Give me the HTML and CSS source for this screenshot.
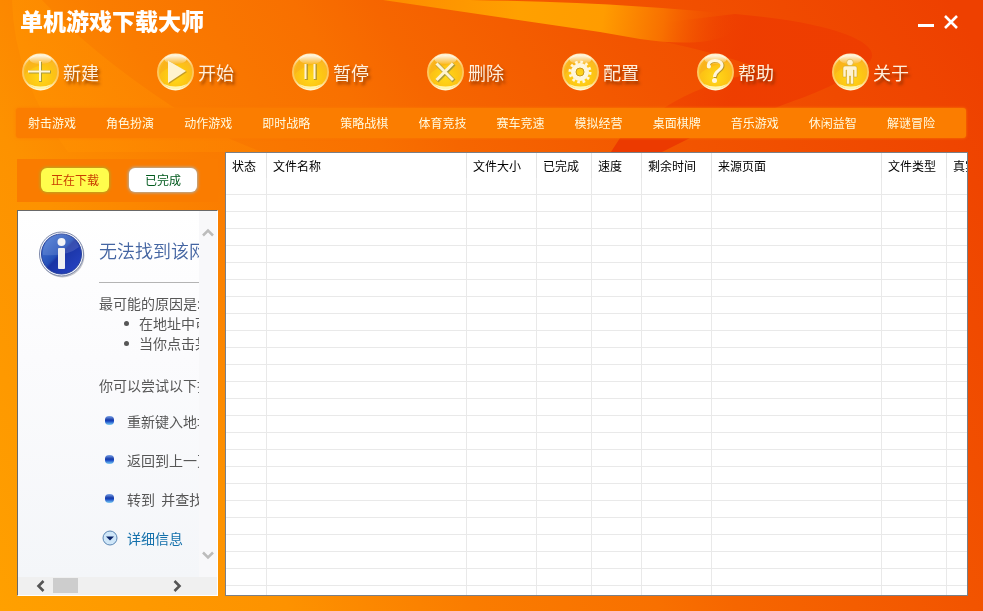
FILE: index.html
```html
<!DOCTYPE html>
<html lang="zh-CN">
<head>
<meta charset="utf-8">
<title>单机游戏下载大师</title>
<link rel="stylesheet" href="styles.css">
</head>
<body>
<svg class="backdrop" viewBox="0 0 983 611" preserveAspectRatio="none" aria-hidden="true">
  <defs>
    <linearGradient id="base" gradientUnits="userSpaceOnUse" x1="0" y1="611" x2="967" y2="26">
      <stop offset="0" stop-color="#ffa000"/><stop offset=".22" stop-color="#fd9200"/><stop offset=".28" stop-color="#fc8800"/><stop offset=".36" stop-color="#fa7c00"/><stop offset=".5" stop-color="#f87000"/><stop offset=".56" stop-color="#f66600"/><stop offset=".74" stop-color="#f25400"/><stop offset="1" stop-color="#ee4000"/>
    </linearGradient>
    <linearGradient id="swoosh" gradientUnits="userSpaceOnUse" x1="400" y1="0" x2="735" y2="50">
      <stop offset="0" stop-color="#fd8e00"/><stop offset=".35" stop-color="#ffa000"/><stop offset=".6" stop-color="#ff9c00"/><stop offset=".78" stop-color="#f87000"/><stop offset="1" stop-color="#ee4000" stop-opacity="0"/>
    </linearGradient>
    <linearGradient id="glow" gradientUnits="userSpaceOnUse" x1="20" y1="100" x2="220" y2="60">
      <stop offset="0" stop-color="#ff9200" stop-opacity=".7"/><stop offset="1" stop-color="#fd8400" stop-opacity=".6"/>
    </linearGradient>
    <linearGradient id="ember" gradientUnits="userSpaceOnUse" x1="600" y1="30" x2="740" y2="60">
      <stop offset="0" stop-color="#ee3c00" stop-opacity="0"/><stop offset="1" stop-color="#ee3c00" stop-opacity=".9"/>
    </linearGradient>
  </defs>
  <rect width="983" height="611" fill="url(#base)"/>
  <path d="M12 0H42Q90 52 170 105Q215 135 262 152H68Q14 80 12 0Z" fill="url(#glow)"/>
  <path d="M600 30L735 14C850 24 890 48 865 66C830 90 800 98 775 108H664Q700 84 765 70Q700 46 600 30Z" fill="url(#ember)"/>
  <path d="M611 152L620 138H690L662 152Z" fill="#ec3a00"/>
  <path d="M383 0H470Q640 3 745 16C740 40 700 48 640 39L600 32Z" fill="url(#swoosh)"/>
</svg>
<div class="app">
  <header class="titlebar">
    <h1>单机游戏下载大师</h1>
    <div class="window-buttons">
      <button type="button" aria-label="最小化"><svg width="16" height="16" viewBox="0 0 16 16"><path d="M0 11.5H16" stroke="#fff" stroke-width="3"/></svg></button>
      <button type="button" aria-label="关闭"><svg width="16" height="16" viewBox="0 0 16 16"><path d="M2 2L14 14M14 2L2 14" stroke="#fff" stroke-width="2.6"/></svg></button>
    </div>
  </header>

  <svg class="defs" aria-hidden="true">
    <defs>
      <radialGradient id="gold" cx=".5" cy=".65" r=".6"><stop offset="0" stop-color="#ffd91a"/><stop offset=".6" stop-color="#fdc414"/><stop offset="1" stop-color="#fbb626"/></radialGradient>
      <linearGradient id="rim" x1="0" x2="0" y1="0" y2="1"><stop offset="0" stop-color="#fff3cf"/><stop offset=".35" stop-color="#fdc35c"/><stop offset=".7" stop-color="#fdcb60"/><stop offset="1" stop-color="#fff9d8"/></linearGradient>
      <linearGradient id="shine" x1="0" x2="0" y1="0" y2="1"><stop offset="0" stop-color="#fff" stop-opacity=".9"/><stop offset="1" stop-color="#fff" stop-opacity=".1"/></linearGradient>
      <g id="orb">
        <circle cx="18.5" cy="19" r="17.6" fill="url(#gold)" stroke="url(#rim)" stroke-width="1.8"/>
        <path d="M3 21C3 11 9 4 19 4c5 0 9 2 12 5C22 10 8 15 3 21Z" fill="#f8a418" opacity=".4"/>
        <ellipse cx="18.5" cy="6.5" rx="11" ry="4.5" fill="url(#shine)"/>
        <path d="M7 31Q18.500 41 30 31Q18.500 36 7 31Z" fill="#fffac0" opacity=".9"/>
      </g>
    </defs>
  </svg>

  <nav class="toolbar" aria-label="工具栏">
    <button type="button"><svg width="37" height="38"><use href="#orb"/><path d="M18.500 9V29M7 19H29" stroke="#a99a3a" stroke-width="3"/><path d="M18 8V28M6 18.500H28" stroke="#fff6d8" stroke-width="2"/></svg><span>新建</span></button>
    <button type="button"><svg width="37" height="38"><use href="#orb"/><path d="M12 8L30 19L12 31Z" fill="#c49d24"/><path d="M11 7.500L29 18L11 30Z" fill="#fff3cf"/></svg><span>开始</span></button>
    <button type="button"><svg width="37" height="38"><use href="#orb"/><path d="M14.500 11V27M23.500 11V27" stroke="#b79a2a" stroke-width="3"/><path d="M13.500 11V26M22.500 11V26" stroke="#fff3d8" stroke-width="2"/></svg><span>暂停</span></button>
    <button type="button"><svg width="37" height="38"><use href="#orb"/><path d="M10 11L27 28M27 11L10 28" stroke="#a99b3a" stroke-width="4"/><path d="M9.500 10.500L26 27M26 10.500L9.500 27" stroke="#fff3cf" stroke-width="3"/></svg><span>删除</span></button>
    <button type="button"><svg width="37" height="38"><use href="#orb"/><circle cx="18" cy="19" r="6.500" fill="none" stroke="#fff6dc" stroke-width="5"/><circle cx="18" cy="19" r="10" fill="none" stroke="#fff6dc" stroke-width="3" stroke-dasharray="2.600 2.636"/><circle cx="18" cy="19" r="4" fill="none" stroke="#c79a1c"/></svg><span>配置</span></button>
    <button type="button"><svg width="37" height="38"><use href="#orb"/><g fill="none"><path d="M12 15C10 6 26 6 26 13C26 18 18.500 18 18.500 25" stroke="#b8952a" stroke-width="3"/><path d="M11.500 14.500C9.500 5.500 25 5.500 25 12.500C25 17.500 17.500 17.500 17.500 24" stroke="#fff6dc" stroke-width="3"/></g><circle cx="12" cy="13.500" r="2" fill="#fff6dc"/><circle cx="17.500" cy="27.500" r="2.500" fill="#fff6dc"/></svg><span>帮助</span></button>
    <button type="button"><svg width="37" height="38"><use href="#orb"/><g fill="#fff3d0" stroke="#c99c22" stroke-width=".5"><circle cx="18" cy="9.500" r="3.300"/><path d="M13 13H23Q25 13 25 15V24H22V17H21.500V31H18.500V23H17.500V31H14.500V17H14V24H11V15Q11 13 13 13Z"/></g></svg><span>关于</span></button>
  </nav>

  <nav class="categories" aria-label="游戏分类">
    <a href="#">射击游戏</a><a href="#">角色扮演</a><a href="#">动作游戏</a><a href="#">即时战略</a><a href="#">策略战棋</a><a href="#">体育竞技</a><a href="#">赛车竞速</a><a href="#">模拟经营</a><a href="#">桌面棋牌</a><a href="#">音乐游戏</a><a href="#">休闲益智</a><a href="#">解谜冒险</a>
  </nav>

  <main class="workspace">
    <aside class="sidebar">
      <div class="tabs">
        <button type="button" class="tab tab-active">正在下载</button>
        <button type="button" class="tab">已完成</button>
      </div>
      <section class="browser">
        <div class="page">
          <div class="page-head">
            <svg width="48" height="49" viewBox="0 0 48 49" aria-hidden="true">
              <defs><linearGradient id="blue" x1="0" x2="1" y1="0" y2="1"><stop offset="0" stop-color="#4f80d8"/><stop offset=".45" stop-color="#2450b8"/><stop offset=".5" stop-color="#1a34a4"/><stop offset="1" stop-color="#2846c8"/></linearGradient></defs>
              <circle cx="23.500" cy="24.500" r="22" fill="#c4c6cc"/><circle cx="22.500" cy="23" r="22" fill="#f2f4fa" stroke="#7c88aa"/><circle cx="22.500" cy="23" r="20" fill="url(#blue)" stroke="#2a449c"/>
              <path d="M4 24A18.500 18.500 0 0 1 40 16Q28 26 4 24Z" fill="#fff" opacity=".13"/>
              <circle cx="22.500" cy="11" r="4" fill="#f4f4f6"/><rect x="19" y="17" width="7" height="21" rx="1" fill="#f0f0f2"/>
            </svg>
            <h2>无法找到该网</h2>
          </div>
          <div class="page-body">
            <p>最可能的原因是:</p>
            <ul class="causes"><li>在地址中可</li><li>当你点击某</li></ul>
            <p class="try">你可以尝试以下操</p>
            <ul class="actions">
              <li><i class="pill"></i>重新键入地址</li>
              <li><i class="pill"></i>返回到上一页</li>
              <li><i class="pill"></i>转到&nbsp; 并查找</li>
              <li><svg width="16" height="16" aria-hidden="true"><circle cx="8" cy="8" r="7" fill="#cfe6f8" stroke="#5b86b4"/><path d="M4 6.500H12L8 10.500Z" fill="#0b2468"/></svg><a href="#">详细信息</a></li>
            </ul>
          </div>
        </div>
        <div class="scroll-y">
          <button type="button" aria-label="向上"><svg width="12" height="9"><path d="M1 7.500L6 2.500L11 7.500" fill="none" stroke="#bcbcbc" stroke-width="2.500"/></svg></button>
          <button type="button" aria-label="向下"><svg width="12" height="9"><path d="M1 1.500L6 6.500L11 1.500" fill="none" stroke="#bcbcbc" stroke-width="2.500"/></svg></button>
        </div>
        <div class="scroll-x">
          <button type="button" aria-label="向左"><svg width="9" height="12"><path d="M7.500 1L2.500 6L7.500 11" fill="none" stroke="#555" stroke-width="2.600"/></svg></button>
          <span class="thumb"></span>
          <button type="button" aria-label="向右"><svg width="9" height="12"><path d="M1.500 1L6.500 6L1.500 11" fill="none" stroke="#555" stroke-width="2.600"/></svg></button>
        </div>
      </section>
    </aside>

    <section class="downloads">
      <table>
        <colgroup><col class="c-state"><col class="c-name"><col class="c-size"><col class="c-done"><col class="c-speed"><col class="c-left"><col class="c-source"><col class="c-type"><col></colgroup>
        <thead><tr><th>状态</th><th>文件名称</th><th>文件大小</th><th>已完成</th><th>速度</th><th>剩余时间</th><th>来源页面</th><th>文件类型</th><th>真实</th></tr></thead>
        <tbody id="rows"></tbody>
      </table>
    </section>
  </main>
</div>
<script src="rows.js"></script>
</body>
</html>
```
FILE: styles.css
```css
* { box-sizing: border-box; }
body {
  margin: 0;
  font-family: "Noto Sans CJK SC", sans-serif;
  font-size: 12px;
  background: #f97400;
}
button {
  border: 0;
  padding: 0;
  background: none;
  font: inherit;
  color: inherit;
}
svg { display: block; flex: none; }
ul, p, h1, h2 { margin: 0; padding: 0; list-style: none; }
a { color: inherit; text-decoration: none; }
.defs { width: 0; height: 0; }
.backdrop {
  position: fixed;
  inset: 0;
  width: 100%;
  height: 100%;
  z-index: -1;
}
.app {
  display: flex;
  flex-direction: column;
  height: 100vh;
}

.titlebar {
  display: flex;
  justify-content: space-between;
  align-items: center;
  height: 44px;
  padding: 0 24px 0 20px;
}
.titlebar h1 {
  padding-bottom: 4px;
  color: #fff;
  font-size: 23px;
  line-height: 40px;
  font-weight: 900;
}
.window-buttons { display: flex; gap: 9px; }

.toolbar {
  display: grid;
  grid-template-columns: repeat(7, 1fr);
  padding: 9px 16px 0 22px;
}
.toolbar button {
  display: flex;
  align-items: center;
  gap: 4px;
  color: #fff0dc;
  font-size: 18px;
  line-height: 38px;
  text-shadow: 2px 3px 3px rgba(110, 40, 0, .75);
}

.categories {
  display: grid;
  grid-template-columns: repeat(12, 1fr);
  margin: 17px 17px 0 16px;
  padding-right: 13px;
  border-radius: 3px;
  background: #fb7d00;
  box-shadow: 0 0 3px #fb7d00;
  color: #fffbe0;
  line-height: 30px;
}
.categories a { padding-left: 12px; white-space: nowrap; }

.workspace {
  display: grid;
  grid-template-columns: 201px 1fr;
  gap: 7px;
  flex: 1;
  min-height: 0;
  padding: 14px 15px 15px 17px;
}
.sidebar {
  display: flex;
  flex-direction: column;
  gap: 8px;
  min-height: 0;
  padding-top: 7px;
}
.tabs {
  display: flex;
  align-items: center;
  gap: 20px;
  height: 43px;
  padding: 0 0 2px 24px;
  background: #fa7c00;
}
.tab {
  width: 68px;
  height: 24px;
  border-radius: 6px;
  background: #fff;
  box-shadow: 0 0 3px 1px #b0b0a8;
  color: #00591c;
  line-height: 24px;
}
.tab-active {
  background: #fffd4c;
  box-shadow: 0 0 3px 1px #b8a820;
  color: #c83c00;
}

.browser {
  display: grid;
  grid-template-columns: 1fr 18px;
  grid-template-rows: 1fr 18px;
  flex: 1;
  min-height: 0;
  border: 1px solid;
  border-color: #696969 #fff #fff #696969;
  background: #f0f0f0;
}
.page {
  overflow: hidden;
  padding: 20px 0 0 21px;
  background: linear-gradient(#fff, #fbfbfd 40%, #f4f6f9);
  color: #575757;
  font-size: 14px;
  line-height: 20px;
  white-space: nowrap;
}
.page-head { display: flex; gap: 12px; }
.page-head h2 {
  flex: 1;
  height: 52px;
  border-bottom: 1px solid #b4b4b4;
  color: #4465a2;
  font-size: 18px;
  line-height: 38px;
  font-weight: 350;
}
.page-body { padding: 10px 0 0 60px; }
.causes { padding-left: 25px; }
.causes li {
  display: flex;
  align-items: center;
  gap: 10px;
}
.causes li::before {
  content: "";
  flex: none;
  width: 5px;
  height: 5px;
  border-radius: 50%;
  background: #575757;
}
.try { padding-top: 22px; }
.actions { display: grid; padding-top: 6px; }
.actions li {
  display: flex;
  align-items: center;
  gap: 9px;
  height: 39px;
  padding-left: 3px;
}
.actions a { color: #1370ab; }
.pill {
  flex: none;
  width: 9px;
  height: 9px;
  margin: 0 4px 0 3px;
  border-radius: 4px;
  background: linear-gradient(#7ba2e6, #1438a8 45%, #1d50c8 60%, #7fd0f4);
}
.scroll-y {
  display: flex;
  flex-direction: column;
  justify-content: space-between;
  align-items: center;
  padding: 17px 1px 17px 0;
  background: #f8f8fa;
}
.scroll-x {
  display: flex;
  align-items: center;
  grid-column: 1 / 3;
  padding: 0 35px 1px 18px;
}
.thumb {
  width: 25px;
  height: 15px;
  margin: 0 auto 0 8px;
  background: #cdcdcd;
}

.downloads {
  min-width: 0;
  min-height: 0;
  overflow: hidden;
  border: 1px solid #7a7f86;
  background: #fff;
}
.downloads table {
  width: 100%;
  table-layout: fixed;
  border-collapse: separate;
  border-spacing: 0;
}
.c-state { width: 41px; }
.c-name { width: 200px; }
.c-size, .c-left { width: 70px; }
.c-done { width: 55px; }
.c-speed { width: 50px; }
.c-source { width: 170px; }
.c-type { width: 65px; }
.downloads th {
  height: 25px;
  overflow: hidden;
  padding: 1px 0 1px 6px;
  border-right: 1px solid #e4e4e4;
  font-weight: 400;
  line-height: 23px;
  text-align: left;
  white-space: nowrap;
}
.downloads td {
  height: 17px;
  padding: 0;
  border-right: 1px solid #e9e9e9;
  border-bottom: 1px solid #e9e9e9;
}
.downloads th:last-child, .downloads td:last-child { border-right: 0; }
```
FILE: rows.js
```js
const body = document.getElementById("rows");
for (let r = 0; r < 25; r++) {
  const row = body.insertRow();
  for (let c = 0; c < 9; c++) row.insertCell();
}
```
